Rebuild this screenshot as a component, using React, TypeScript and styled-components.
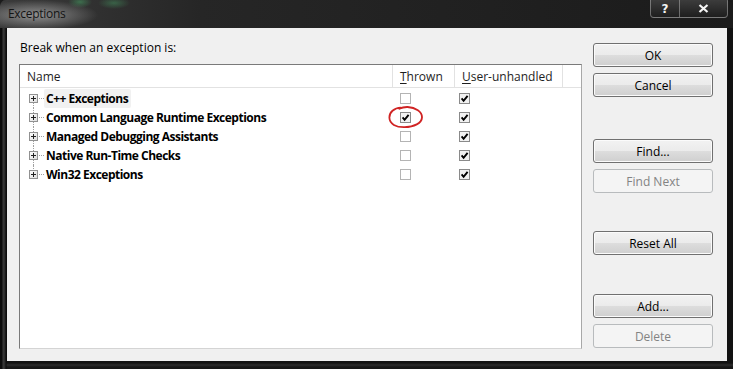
import React from 'react'
import styled, { createGlobalStyle } from 'styled-components'

const GlobalStyle = createGlobalStyle`
  html, body {
    margin: 0;
    padding: 0;
    background: #1b1b1b;
  }
  body {
    font-family: "Open Sans", "Noto Sans", "Liberation Sans", sans-serif;
    font-size: 12px;
  }
`

const Window = styled.div`
  width: 733px;
  height: 369px;
  display: flex;
  flex-direction: column;
  overflow: hidden;
  border-radius: 6px 6px 0 0;
  background:
    linear-gradient(to right, #0c0c0c 0, #0c0c0c 2px, #3a3a3a 3px, #2a2a2a 5px, #0a0a0a 6px, transparent 7px),
    linear-gradient(to bottom, transparent 363px, #2c2c2c 365px, #161616 367px),
    #121212;
`

const TitleBar = styled.div`
  height: 28px;
  flex: none;
  display: flex;
  justify-content: space-between;
  align-items: flex-start;
  background:
    radial-gradient(ellipse 62px 15px at 36px 15px, rgba(160, 160, 160, 0.85), rgba(150, 150, 150, 0) 100%),
    radial-gradient(ellipse 12px 6px at 80px 2px, rgba(70, 160, 100, 0.55), transparent),
    radial-gradient(ellipse 16px 6px at 114px 3px, rgba(70, 160, 100, 0.45), transparent),
    linear-gradient(to right, #3a3a3a 0, #262626 200px, #1b1b1b 100%);
`

const Title = styled.div`
  margin: 6px 0 0 8px;
  font-size: 12px;
  line-height: 16px;
  letter-spacing: -0.3px;
  color: #141414;
`

const Caption = styled.div`
  display: flex;
  margin-right: 5px;
  height: 17px;
  border: 1px solid rgba(200, 200, 200, 0.45);
  border-top: none;
  border-radius: 0 0 4px 4px;
  background: linear-gradient(to bottom, #3c3c3c, #1e1e1e);
`

const CaptionButton = styled.div<{ $w: number }>`
  width: ${(p) => p.$w}px;
  display: flex;
  align-items: center;
  justify-content: center;
  color: #f4f4f4;
  font-family: "DejaVu Sans", sans-serif;
  font-weight: bold;
  font-size: 12px;
  & + & {
    border-left: 1px solid rgba(200, 200, 200, 0.45);
  }
`

const Client = styled.div`
  flex: none;
  width: 720px;
  height: 333px;
  margin-left: 7px;
  background: #f0f0f0;
  display: flex;
  padding: 0 14px 0 12px;
  box-sizing: border-box;
`

const LeftPane = styled.div`
  width: 563px;
  display: flex;
  flex-direction: column;
`

const Prompt = styled.div`
  margin: 12px 0 0 1px;
  line-height: 16px;
  color: #000;
`

const ListBox = styled.div`
  margin-top: 8px;
  height: 285px;
  box-sizing: border-box;
  background: #fff;
  border: 1px solid;
  border-color: #7a7a7a #a8a8a8 #d4d4d4 #7a7a7a;
  display: flex;
  flex-direction: column;
`

const HeaderRow = styled.div`
  height: 23px;
  display: flex;
  border-bottom: 1px solid #e2e2e2;
  box-sizing: border-box;
`

const HeaderCell = styled.div<{ $w?: number }>`
  ${(p) => (p.$w ? `width: ${p.$w}px; flex: none;` : 'flex: 1;')}
  box-sizing: border-box;
  padding-left: 7px;
  display: flex;
  align-items: center;
  color: #1e1e1e;
  border-right: 1px solid #e2e2e2;
  &:last-child {
    border-right: none;
  }
  u {
    text-decoration: underline;
    text-underline-offset: 2px;
  }
`

const Rows = styled.div`
  padding-top: 1px;
  display: flex;
  flex-direction: column;
`

const Row = styled.div`
  height: 19px;
  display: flex;
  align-items: stretch;
`

const NameCell = styled.div`
  width: 373px;
  flex: none;
  display: flex;
  align-items: center;
  padding-left: 9px;
  box-sizing: border-box;
`

const Gutter = styled.div<{ $first?: boolean; $last?: boolean }>`
  position: relative;
  width: 9px;
  align-self: stretch;
  display: flex;
  align-items: center;
  &::before {
    content: '';
    position: absolute;
    left: 4px;
    top: ${(p) => (p.$first ? '50%' : '0')};
    bottom: ${(p) => (p.$last ? '50%' : '0')};
    border-left: 1px dotted #a0a0a0;
  }
  svg {
    position: relative;
  }
`

const Dash = styled.div`
  width: 5px;
  margin-left: 1px;
  border-top: 1px dotted #a0a0a0;
`

const ItemText = styled.div<{ $selected?: boolean }>`
  padding: 0 3px 0 2px;
  height: 19px;
  line-height: 19px;
  font-weight: bold;
  letter-spacing: -0.5px;
  color: #000;
  border-radius: 2px;
  background: ${(p) => (p.$selected ? '#f1f1f1' : 'transparent')};
`

const CheckCell = styled.div<{ $w: number; $pad: number }>`
  position: relative;
  width: ${(p) => p.$w}px;
  flex: none;
  display: flex;
  align-items: center;
  padding-left: ${(p) => p.$pad}px;
  box-sizing: border-box;
`

const Scribble = styled.svg`
  position: absolute;
  left: -5px;
  top: -2px;
  pointer-events: none;
`

const ButtonColumn = styled.div`
  margin-left: 11px;
  width: 120px;
  padding-top: 15px;
  display: flex;
  flex-direction: column;
`

const Button = styled.div<{ $gap?: number; $disabled?: boolean }>`
  height: 24px;
  margin-top: ${(p) => p.$gap ?? 0}px;
  box-sizing: border-box;
  border-radius: 3px;
  border: 1px solid ${(p) => (p.$disabled ? '#b8bbbd' : '#707070')};
  box-shadow: inset 0 0 0 1px ${(p) => (p.$disabled ? '#f4f4f4' : '#fbfbfb')};
  background: ${(p) =>
    p.$disabled
      ? '#f4f4f4'
      : 'linear-gradient(to bottom, #f2f2f2 0%, #ebebeb 50%, #dddddd 51%, #cfcfcf 100%)'};
  color: ${(p) => (p.$disabled ? '#838383' : '#000')};
  display: flex;
  align-items: center;
  justify-content: center;
`

const PlusBox = () => (
  <svg width="9" height="9" viewBox="0 0 9 9">
    <defs>
      <linearGradient id="pb" x1="0" y1="0" x2="1" y2="1">
        <stop offset="0" stopColor="#ffffff" />
        <stop offset="1" stopColor="#dcdcdc" />
      </linearGradient>
    </defs>
    <rect x="0.5" y="0.5" width="8" height="8" fill="url(#pb)" stroke="#919191" />
    <path d="M2 4.5h5M4.5 2v5" stroke="#202020" strokeWidth="1" />
  </svg>
)

const CheckBox = ({ checked }: { checked: boolean }) => (
  <svg width="11" height="11" viewBox="0 0 11 11">
    <rect
      x="0.5"
      y="0.5"
      width="10"
      height="10"
      fill={checked ? '#f2f2f2' : '#ffffff'}
      stroke={checked ? '#8a8a8a' : '#b4b4b4'}
    />
    {checked && (
      <path
        d="M2.6 5.4 L4.6 7.8 L8.6 2.8"
        fill="none"
        stroke="#000"
        strokeWidth="1.9"
        strokeLinejoin="miter"
      />
    )}
  </svg>
)

const items = [
  { name: 'C++ Exceptions', thrown: false, user: true },
  { name: 'Common Language Runtime Exceptions', thrown: true, user: true },
  { name: 'Managed Debugging Assistants', thrown: false, user: true },
  { name: 'Native Run-Time Checks', thrown: false, user: true },
  { name: 'Win32 Exceptions', thrown: false, user: true },
]

const App = () => {
  return (
    <>
      <GlobalStyle />
      <Window>
        <TitleBar>
          <Title>Exceptions</Title>
          <Caption>
            <CaptionButton $w={28}>?</CaptionButton>
            <CaptionButton $w={47}>
              <svg width="11" height="9" viewBox="0 0 11 9">
                <path d="M1.5 1 L9.5 8 M9.5 1 L1.5 8" stroke="#f4f4f4" strokeWidth="2.2" />
              </svg>
            </CaptionButton>
          </Caption>
        </TitleBar>
        <Client>
          <LeftPane>
            <Prompt>Break when an exception is:</Prompt>
            <ListBox>
              <HeaderRow>
                <HeaderCell $w={373}>Name</HeaderCell>
                <HeaderCell $w={62}>
                  <span>
                    <u>T</u>hrown
                  </span>
                </HeaderCell>
                <HeaderCell $w={108}>
                  <span>
                    <u>U</u>ser-unhandled
                  </span>
                </HeaderCell>
                <HeaderCell />
              </HeaderRow>
              <Rows>
                {items.map((it, i) => (
                  <Row key={it.name}>
                    <NameCell>
                      <Gutter $first={i === 0} $last={i === items.length - 1}>
                        <PlusBox />
                      </Gutter>
                      <Dash />
                      <ItemText $selected={i === 0}>{it.name}</ItemText>
                    </NameCell>
                    <CheckCell $w={62} $pad={7}>
                      <CheckBox checked={it.thrown} />
                      {it.thrown && (
                        <Scribble width="36" height="24" viewBox="0 0 36 24">
                          <path
                            d="M13 1.6 C6 2 1.2 6.2 1.4 11.8 C1.6 18 8 21.4 16.6 21.2 C26 21 33.8 17.2 34 11.4 C34.2 5.6 27.6 1.4 19.6 1 C16.4 0.9 13.6 1.6 11.4 2.8"
                            fill="none"
                            stroke="#d02424"
                            strokeWidth="1.8"
                            strokeLinecap="round"
                          />
                        </Scribble>
                      )}
                    </CheckCell>
                    <CheckCell $w={108} $pad={4}>
                      <CheckBox checked={it.user} />
                    </CheckCell>
                  </Row>
                ))}
              </Rows>
            </ListBox>
          </LeftPane>
          <ButtonColumn>
            <Button>OK</Button>
            <Button $gap={6}>Cancel</Button>
            <Button $gap={42}>Find...</Button>
            <Button $gap={6} $disabled>
              Find Next
            </Button>
            <Button $gap={38}>Reset All</Button>
            <Button $gap={39}>Add...</Button>
            <Button $gap={6} $disabled>
              Delete
            </Button>
          </ButtonColumn>
        </Client>
      </Window>
    </>
  )
}

export default App
